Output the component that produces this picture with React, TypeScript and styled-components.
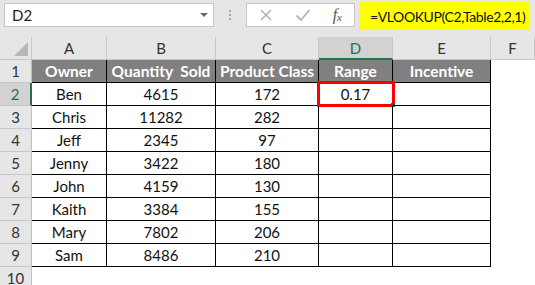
import styled, { createGlobalStyle } from 'styled-components';

const GlobalStyle = createGlobalStyle`
  html, body {
    margin: 0;
    padding: 0;
    background: #ffffff;
    overflow: hidden;
  }
  body {
    font-family: Lato, "Liberation Sans", sans-serif;
  }
`;

const COLS = '32px 75px 109px 103px 74px 98px 1fr';
const LETTERS = ['A', 'B', 'C', 'D', 'E', 'F'];
const HEADERS = ['Owner', 'Quantity  Sold', 'Product Class', 'Range', 'Incentive'];

const ROWS: [string, string, string][] = [
  ['Ben', '4615', '172'],
  ['Chris', '11282', '282'],
  ['Jeff', '2345', '97'],
  ['Jenny', '3422', '180'],
  ['John', '4159', '130'],
  ['Kaith', '3384', '155'],
  ['Mary', '7802', '206'],
  ['Sam', '8486', '210'],
];

export default function App() {
  return (
    <>
      <GlobalStyle />
      <Sheet>
        <FormulaBar>
          <NameBox>
            <span>D2</span>
            <Caret />
          </NameBox>
          <Grip>
            <i /><i /><i />
          </Grip>
          <ActionBox>
            <svg width="14" height="14" viewBox="0 0 14 14">
              <path d="M2 2 L12 12 M12 2 L2 12" stroke="#b4b4b4" strokeWidth="1.6" fill="none" />
            </svg>
            <svg width="16" height="14" viewBox="0 0 16 14">
              <path d="M1.5 7.5 L6 12 L14.5 2" stroke="#b4b4b4" strokeWidth="1.8" fill="none" />
            </svg>
            <Fx>f<sub>x</sub></Fx>
          </ActionBox>
          <Formula>=VLOOKUP(C2,Table2,2,1)</Formula>
        </FormulaBar>

        <ColHeadRow>
          <Corner>
            <svg width="14" height="14" viewBox="0 0 14 14">
              <path d="M14 0 L14 14 L0 14 Z" fill="#b8b8b8" />
            </svg>
          </Corner>
          {LETTERS.map(l => (
            <ColHead key={l} $active={l === 'D'}>{l}</ColHead>
          ))}
        </ColHeadRow>

        <Row>
          <RowHead>1</RowHead>
          {HEADERS.map(h => (
            <TitleCell key={h}>{h}</TitleCell>
          ))}
          <Blank />
        </Row>

        {ROWS.map((r, i) => (
          <Row key={r[0]}>
            <RowHead $active={i === 0}>{i + 2}</RowHead>
            <Cell>{r[0]}</Cell>
            <Cell>{r[1]}</Cell>
            <Cell>{r[2]}</Cell>
            <Cell>
              {i === 0 && '0.17'}
              {i === 0 && (
                <Selection>
                  <Handle />
                </Selection>
              )}
            </Cell>
            <Cell />
            <Blank />
          </Row>
        ))}

        <Row>
          <RowHead>10</RowHead>
        </Row>
      </Sheet>
    </>
  );
}

// ── Styled ───────────────────────────────────────────────────────────────────

const Sheet = styled.div`
  width: 535px;
  height: 285px;
  overflow: hidden;
  font-family: Lato, "Liberation Sans", sans-serif;
  font-size: 15px;
  color: #111;
`;

const FormulaBar = styled.div`
  height: 37px;
  box-sizing: border-box;
  background: #e6e6e6;
  display: flex;
  align-items: flex-start;
  padding: 3px 0 0 4px;
`;

const NameBox = styled.div`
  width: 210px;
  height: 24px;
  box-sizing: border-box;
  background: #fff;
  border: 1px solid #c6c6c6;
  display: flex;
  align-items: center;
  justify-content: space-between;
  padding: 0 5px 0 7px;
  font-size: 15px;
  color: #222;
`;

const Caret = styled.span`
  width: 0;
  height: 0;
  border-left: 4px solid transparent;
  border-right: 4px solid transparent;
  border-top: 4px solid #6a6a6a;
`;

const Grip = styled.div`
  width: 32px;
  height: 24px;
  display: flex;
  flex-direction: column;
  align-items: center;
  justify-content: center;
  gap: 2px;

  i {
    width: 2px;
    height: 2px;
    background: #a8a8a8;
  }
`;

const ActionBox = styled.div`
  width: 109px;
  height: 24px;
  box-sizing: border-box;
  background: #fff;
  border: 1px solid #c6c6c6;
  display: flex;
  align-items: center;
  justify-content: space-between;
  padding: 0 12px 0 12px;
`;

const Fx = styled.span`
  font-family: "Liberation Serif", serif;
  font-style: italic;
  font-size: 16px;
  color: #555;
  line-height: 1;

  sub {
    font-size: 11px;
    vertical-align: -1px;
  }
`;

const Formula = styled.div`
  margin: -1px 0 0 4px;
  width: 171px;
  height: 28px;
  box-sizing: border-box;
  background: #ffff00;
  display: flex;
  align-items: center;
  padding-left: 11px;
  font-size: 14px;
  letter-spacing: -0.4px;
  color: #111;
  white-space: nowrap;
`;

const Row = styled.div`
  display: grid;
  grid-template-columns: ${COLS};
  height: 23px;
`;

const ColHeadRow = styled(Row)`
  background: #e6e6e6;
`;

const Corner = styled.div`
  box-sizing: border-box;
  border-right: 1px solid #c8c8c8;
  border-bottom: 1px solid #c8c8c8;
  display: flex;
  align-items: flex-end;
  justify-content: flex-end;
  padding: 0 3px 3px 0;
`;

const ColHead = styled.div<{ $active?: boolean }>`
  box-sizing: border-box;
  display: flex;
  align-items: center;
  justify-content: center;
  background: ${p => (p.$active ? '#d2d2d2' : '#e6e6e6')};
  border-right: 1px solid #c8c8c8;
  border-bottom: ${p => (p.$active ? '2px solid #217346' : '1px solid #c8c8c8')};
  color: ${p => (p.$active ? '#217346' : '#333')};
  font-size: 15px;
`;

const RowHead = styled.div<{ $active?: boolean }>`
  box-sizing: border-box;
  display: flex;
  align-items: center;
  justify-content: center;
  background: ${p => (p.$active ? '#d2d2d2' : '#e6e6e6')};
  border-right: ${p => (p.$active ? '2px solid #217346' : '1px solid #c0c0c0')};
  border-bottom: 1px solid #c8c8c8;
  color: ${p => (p.$active ? '#217346' : '#333')};
  font-size: 15px;
`;

const Cell = styled.div`
  position: relative;
  box-sizing: border-box;
  display: flex;
  align-items: center;
  justify-content: center;
  border-right: 1px solid #000;
  border-bottom: 1px solid #000;
  color: #111;
  white-space: pre;
`;

const TitleCell = styled(Cell)`
  background: #808080;
  color: #fff;
  font-weight: 700;
  font-size: 15.5px;
`;

const Blank = styled.div`
  background: #fff;
`;

const Selection = styled.div`
  position: absolute;
  left: -2px;
  top: -2px;
  right: -3px;
  bottom: -2px;
  border: 3px solid #ff0000;
  box-sizing: border-box;
`;

const Handle = styled.div`
  position: absolute;
  right: -3px;
  bottom: -3px;
  width: 4px;
  height: 4px;
  background: #1e5a3a;
`;
